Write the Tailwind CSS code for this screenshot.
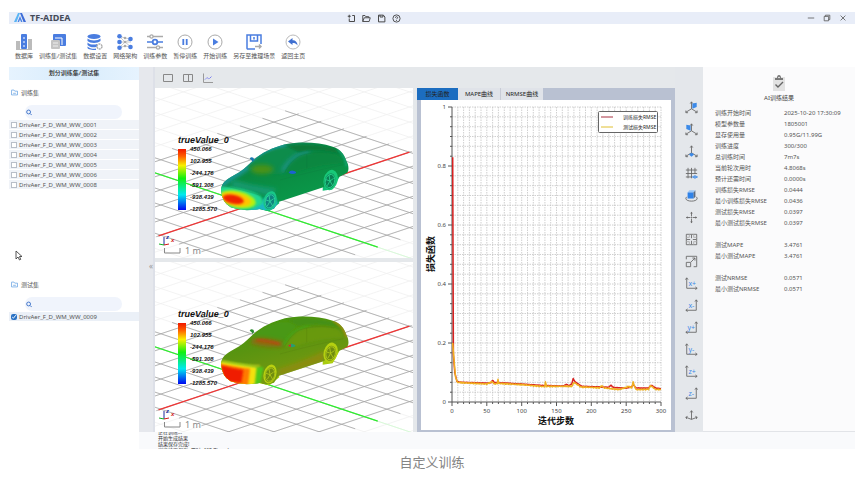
<!DOCTYPE html>
<html lang="zh-CN">
<head>
    <meta charset="UTF-8">
    <meta name="viewport" content="width=device-width, initial-scale=1.0">
    <title>TF-AIDEA</title>
    <script src="https://cdn.jsdelivr.net/npm/@tailwindcss/browser@4"></script>
</head>
<body class="bg-white pt-3 pl-[9px] pr-[13px] font-['Noto_Sans','Noto_Sans_CJK_SC',sans-serif] text-[6px] leading-[10px] text-[#555]">

    <!--Shared drawing definitions-->
    <svg class="absolute w-0 h-0" aria-hidden="true">
        <defs>
            <linearGradient id="rainbow" x1="0" y1="0" x2="0" y2="1">
                <stop offset="0" stop-color="#f01800"/>
                <stop offset=".12" stop-color="#ff6000"/>
                <stop offset=".27" stop-color="#f8f000"/>
                <stop offset=".48" stop-color="#10f010"/>
                <stop offset=".75" stop-color="#00e8f0"/>
                <stop offset="1" stop-color="#0008f0"/>
            </linearGradient>
            <linearGradient id="paintA" x1="0" y1="0" x2=".6" y2="1">
                <stop offset="0" stop-color="#1a8a70"/>
                <stop offset=".45" stop-color="#0a8840"/>
                <stop offset="1" stop-color="#0a9c4c"/>
            </linearGradient>
            <linearGradient id="paintB" x1="0" y1="0" x2=".5" y2="1">
                <stop offset="0" stop-color="#3c9612"/>
                <stop offset=".5" stop-color="#5a9410"/>
                <stop offset="1" stop-color="#7c9a10"/>
            </linearGradient>
            <filter id="soft" x="-40%" y="-40%" width="180%" height="180%"><feGaussianBlur stdDeviation="6"/></filter>
            <filter id="softer" x="-40%" y="-40%" width="180%" height="180%"><feGaussianBlur stdDeviation="3"/></filter>
            <path id="body" d="M33 180C35 158 50 148 72 136C95 123 110 110 122 98C150 72 180 55 225 43C270 34 325 36 368 50C392 58 402 72 409 92C417 106 417 120 412 128L386 142L340 172L205 216L192 236Q165 246 152 236Q100 247 62 232Q36 218 33 180Z"/>
            <clipPath id="bodyClip"><use href="#body"/></clipPath>
            <path id="glass" d="M224 128C236 108 248 90 270 78C300 66 345 66 372 72C388 76 396 88 398 100C350 104 300 112 260 126Z"/>
            <path id="screen" d="M112 112C130 92 160 66 205 56C235 52 262 56 262 68C240 84 228 110 222 130C190 136 140 128 112 112Z"/>
            <g id="spokes" fill="none" stroke-width="2.5">
                <ellipse rx="14" ry="20" transform="rotate(14)"/>
                <path d="M0 0L-3-18M0 0L11-8M0 0L8 14M0 0L-8 14M0 0L-12-4"/>
            </g>
            <g id="gizmo">
                <path d="M9 157v-8" stroke="#1c2a9c" stroke-width="1"/>
                <path d="M9 157l5-1" stroke="#d01818" stroke-width="1"/>
                <path d="M9 157l-5-1" stroke="#10b020" stroke-width="1"/>
                <g font-family="Liberation Sans, sans-serif" font-weight="bold" font-style="italic" font-size="6">
                    <text x="11" y="151" fill="#1c2a9c">z</text>
                    <text x="16" y="154" fill="#d01818">x</text>
                </g>
                <path d="M9.500 160v5h15.500v-5" fill="none" stroke="#888" stroke-width="1"/>
                <text x="30" y="166" font-size="9" fill="#888">1 m</text>
            </g>
            <g id="scale" font-family="Liberation Sans, sans-serif" font-weight="bold" font-style="italic" fill="#111">
                <rect x="23" y="61" width="8" height="61" fill="url(#rainbow)"/>
                <text x="23" y="55" font-size="9">trueValue_0</text>
                <g font-size="6">
                    <text x="35" y="63">450.066</text>
                    <text x="35" y="75">102.955</text>
                    <text x="35" y="87">-244.176</text>
                    <text x="35" y="99">-591.308</text>
                    <text x="35" y="111">-938.439</text>
                    <text x="35" y="123">-1285.570</text>
                </g>
            </g>
            <g id="folder" fill="none" stroke="#5a9be0" stroke-width="1.300">
                <path d="M1 3v8h11V4H7L5.500 2H1z"/><path d="M4 8h5"/>
            </g>
            <g id="lens" fill="none" stroke="#3c72c8" stroke-width="1.800">
                <circle cx="5" cy="5" r="3.700"/><path d="M8 8l3 3"/>
            </g>
            <g id="axesR" fill="none" stroke="#666"><path d="M2 1v12h12"/><path d="M.5 3L2 1l1.500 2M12 11.500L14 13l-2 1.500"/></g>
            <g id="axesL" fill="none" stroke="#666"><path d="M13 1v12H1"/><path d="M11.500 3L13 1l1.500 2M3 11.500L1 13l2 1.500"/></g>
            <g id="tripod" fill="none" stroke="#666"><path d="M7.500 1v8L1 13M7.500 9l6.500 4"/><path d="M6 3l1.500-2L9 3M3.500 13.500H1V11M11.500 13.500H14V11"/></g>
        </defs>
    </svg>

    <div class="relative">
        <!--Title bar-->
        <header class="flex h-3 items-center bg-[#e8edf8] pl-[5px] pr-2">
            <svg class="h-3 w-3" viewBox="0 0 12 12"><path d="M0 10L4 1h2L2.500 10z" fill="#5ab4f4"/><path d="M3.500 10L6 4l2.500 6H7L6 7.500 5 10z" fill="#4a84e4"/><path d="M6 1h2l4 9H9.500z" fill="#3c6cd8"/></svg>
            <h1 class="ml-1 text-[9px] leading-3 font-bold text-[#444a58]">TF-AIDEA</h1>
            <nav class="ml-[276px] flex gap-[6px]">
                <button aria-label="新建" class="block h-[9px] w-[9px]"><svg viewBox="0 0 12 12" fill="none" stroke="#444" stroke-width="1.300"><path d="M7 2h3v8H3V6M1 3h4M3 1v4"/></svg></button>
                <button aria-label="打开" class="block h-[9px] w-[9px]"><svg viewBox="0 0 12 12" fill="none" stroke="#444" stroke-width="1.200"><path d="M1 10V2h3l1 1.500h4V5M1 10l2-5h8L9.500 10z"/></svg></button>
                <button aria-label="保存" class="block h-[9px] w-[9px]"><svg viewBox="0 0 12 12" fill="none" stroke="#444" stroke-width="1.300"><path d="M2 1.500h6.500L10.500 4v6.500H2zM4 1.500V4h4V1.500"/></svg></button>
                <button aria-label="帮助" class="block h-[9px] w-[9px]"><svg viewBox="0 0 12 12" fill="none" stroke="#444" stroke-width="1.200"><circle cx="6" cy="6" r="4.800"/><path d="M4.500 5c0-2 3-2 3 0 0 1-1.500 1-1.500 2M6 8v1.200"/></svg></button>
            </nav>
            <div class="ml-auto flex gap-2">
                <button aria-label="最小化" class="block h-2 w-2"><svg viewBox="0 0 10 10" stroke="#555"><path d="M1 5h8"/></svg></button>
                <button aria-label="还原" class="block h-2 w-2"><svg viewBox="0 0 10 10" fill="none" stroke="#555"><path d="M1.500 3h5.500v5.500H1.500zM3 3V1.500h5.500V7H7"/></svg></button>
                <button aria-label="关闭" class="block h-2 w-2"><svg viewBox="0 0 10 10" stroke="#555"><path d="M2 2l6 6M8 2l-6 6"/></svg></button>
            </div>
        </header>

        <!--Main toolbar-->
        <nav class="flex h-[43px] gap-[6px] bg-white pl-[6px] pt-[10px]">
            <button class="flex flex-col items-center gap-px whitespace-nowrap"><svg class="h-4 w-4" viewBox="0 0 16 16"><path d="M0 7h4v8H0zM12 5h4v11h-4z" fill="#bbb"/><rect x="5" y="0" width="6" height="15" rx="1" fill="#4a7de0"/><path d="M8 3v2M8 7v2M8 11v2" stroke="#fff"/><path d="M0 15.500h16" stroke="#bbb"/></svg><span>数据库</span></button>
            <button class="flex flex-col items-center gap-px whitespace-nowrap"><svg class="h-4 w-4" viewBox="0 0 16 16"><rect x="3" y="0" width="13" height="12" rx="1" fill="#4a7de0"/><path d="M5 4h7v7" stroke="#fff" fill="none"/><rect x="1" y="6" width="9" height="9" rx="1" fill="#c4c4c4"/><path d="M3 9h5M3 12h5" stroke="#eee"/></svg><span>训练集/测试集</span></button>
            <button class="flex flex-col items-center gap-px whitespace-nowrap"><svg class="h-4 w-4" viewBox="0 0 16 16"><ellipse cx="7" cy="2.500" rx="6.500" ry="2.500" fill="#4a7de0"/><path d="M.5 4.500C3 7 11 7 13.500 4.500V7C11 9.500 3 9.500.5 7zM.5 8.500C3 11 8 11 10 10v2.500C7 14 3 13.500.5 11zM.5 12.500C3 15 7 15 9 14.500V16C5 16 1 15.500.5 14z" fill="#4a7de0"/><circle cx="12.500" cy="12.500" r="2.500" fill="#fff" stroke="#aaa" stroke-width="1.400" stroke-dasharray="2 .6"/></svg><span>数据设置</span></button>
            <button class="flex flex-col items-center gap-px whitespace-nowrap"><svg class="h-4 w-4" viewBox="0 0 16 16"><path d="M2 2l6 6 6-3M2 8h12M2 14l6-6 6 5M2 2l6 2 6 1M2 14l6-2 6 1" stroke="#ccc" fill="none"/><g fill="#4a7de0"><circle cx="2.500" cy="2.300" r="2.300"/><circle cx="2.500" cy="8" r="2.300"/><circle cx="2.500" cy="13.700" r="2.300"/><circle cx="13.500" cy="5" r="2.300"/><circle cx="13.500" cy="13" r="2.300"/></g><g fill="#aaa"><circle cx="8" cy="4" r="1.300"/><circle cx="8" cy="8" r="1.300"/><circle cx="8" cy="12" r="1.300"/></g></svg><span>网络架构</span></button>
            <button class="flex flex-col items-center gap-px whitespace-nowrap"><svg class="h-4 w-4" viewBox="0 0 16 16" fill="none" stroke-width="1.300"><path d="M0 2.500h3M6 2.500h10M0 13.500h9M13 13.500h3" stroke="#aaa"/><path d="M0 8h5.500M10.500 8H16" stroke="#4a7de0"/><circle cx="4.500" cy="2.500" r="1.600" stroke="#aaa"/><circle cx="8" cy="8" r="2.300" stroke="#4a7de0" stroke-width="1.800"/><circle cx="11" cy="13.500" r="1.600" stroke="#aaa"/></svg><span>训练参数</span></button>
            <button class="flex flex-col items-center gap-px whitespace-nowrap"><svg class="h-4 w-4" viewBox="0 0 16 16"><circle cx="8" cy="8" r="7" fill="#fff" stroke="#aaa"/><path d="M6.300 5v6M9.700 5v6" stroke="#4a7de0" stroke-width="1.800"/></svg><span>暂停训练</span></button>
            <button class="flex flex-col items-center gap-px whitespace-nowrap"><svg class="h-4 w-4" viewBox="0 0 16 16"><circle cx="8" cy="8" r="7" fill="#fff" stroke="#aaa"/><path d="M6 4.500L11.500 8 6 11.500z" fill="#4a7de0"/></svg><span>开始训练</span></button>
            <button class="flex flex-col items-center gap-px whitespace-nowrap"><svg class="h-4 w-4" viewBox="0 0 16 16" fill="none" stroke="#4a7de0" stroke-width="1.500"><path d="M9 15H1.500A1 1 0 0 1 1 14V1h14v9M4.500 1v6h7V1M8 3v2.500"/><path d="M9 12.500h6M13 10.500l2 2-2 2" stroke="#aaa"/></svg><span>另存至推理场景</span></button>
            <button class="flex flex-col items-center gap-px whitespace-nowrap"><svg class="h-4 w-4" viewBox="0 0 16 16"><circle cx="8" cy="8" r="7" fill="#fff" stroke="#bbb"/><path d="M3 7.500L7.500 4v2.200c3 0 5 2 5 5.300-1.300-2-2.700-2.500-5-2.500v2z" fill="#3f6fd0"/></svg><span>返回主页</span></button>
        </nav>

        <div class="flex">
            <!--Data set lists-->
            <aside class="w-[130px] shrink-0 bg-white">
                <h2 class="h-[13px] bg-linear-to-r from-[#e6f3fe] via-[#d8ecfc] to-[#e6f3fe] text-center leading-[13px] font-medium text-[#222]">划分训练集/测试集</h2>
                <section class="min-h-[192px]">
                    <h3 class="flex h-[25px] items-center gap-[3px] pl-[2px]"><svg class="h-[7px] w-[7px]" viewBox="0 0 13 13"><use href="#folder"/></svg>训练集</h3>
                    <label class="mr-[17px] mb-px ml-4 flex h-[14px] items-center gap-1 rounded-full bg-[#f0f4fc] pl-px"><svg class="h-[7px] w-[7px]" viewBox="0 0 12 12"><use href="#lens"/></svg><input type="search" aria-label="搜索训练集" class="w-full outline-none"></label>
                    <ul id="train-list"></ul>
                </section>
                <section>
                    <h3 class="flex h-[25px] items-center gap-[3px] pl-[2px]"><svg class="h-[7px] w-[7px]" viewBox="0 0 13 13"><use href="#folder"/></svg>测试集</h3>
                    <label class="mr-[17px] mb-px ml-4 flex h-[14px] items-center gap-1 rounded-full bg-[#f0f4fc] pl-px"><svg class="h-[7px] w-[7px]" viewBox="0 0 12 12"><use href="#lens"/></svg><input type="search" aria-label="搜索测试集" class="w-full outline-none"></label>
                    <ul>
                        <li class="mb-px bg-[#ebf0f7]"><label class="flex h-[9px] items-center gap-[2px] pl-[2px]"><input type="checkbox" checked class="h-[6px] w-[6px] accent-[#2a72c4]">DrivAer_F_D_WM_WW_0009</label></li>
                    </ul>
                </section>
            </aside>

            <div class="flex w-4 shrink-0 items-center justify-end border-r-2 border-[#dde0e8] bg-[#e6e8ed]">
                <button aria-label="收起" class="block pt-8 text-[8px] text-[#999]">«</button>
            </div>

            <!--Viewports and chart-->
            <main class="min-w-0 flex-1 bg-[#e5e8eb]">
                <div class="flex h-[21px] items-center gap-[10px] pl-2">
                    <button aria-label="单视图" class="block h-[10px] w-[10px]"><svg viewBox="0 0 10 10" fill="none" stroke="#888"><path d="M.5 1.500h9v7h-9z"/></svg></button>
                    <button aria-label="双视图" class="block h-[10px] w-[10px]"><svg viewBox="0 0 10 10" fill="none" stroke="#888"><path d="M.5 1.500h9v7h-9zM5.500 1.500v7"/></svg></button>
                    <button aria-label="曲线" class="block h-[10px] w-[10px]"><svg viewBox="0 0 10 10" fill="none"><path d="M.5.5v9H10" stroke="#999"/><path d="M2 6.500l2-2 2 1.500L9 3" stroke="#6c70f0" stroke-dasharray="1.500 .8"/></svg></button>
                </div>
                <div class="grid grid-cols-2 gap-1">
                    <div class="flex flex-col gap-1">
                        <svg class="block h-auto w-full bg-white" viewBox="0 0 258 170" role="img" aria-label="trueValue_0">
                            <g class="floor"></g>
                            <g transform="translate(55 42) scale(.3333)">
                                <path d="M340 130l36-18 12 30-20 36-30 4zM150 190l50-14 8 44-30 24-30-6z" fill="#10bc74"/>
                                <use href="#body" fill="url(#paintA)"/>
                                <g clip-path="url(#bodyClip)">
                                    <path d="M30 170C50 146 100 126 130 92C160 64 190 52 225 42" stroke="#1f98a0" stroke-width="16" fill="none" filter="url(#soft)"/>
                                    <path d="M70 150Q130 168 200 176L180 200Q120 180 60 172z" fill="#149a70" filter="url(#soft)"/>
                                    <use href="#screen" fill="#0f8c4c" filter="url(#softer)"/>
                                    <ellipse cx="156" cy="118" rx="34" ry="14" fill="#4a9218" filter="url(#soft)"/>
                                    <path d="M218 124C232 96 255 74 300 62" stroke="#1f9490" stroke-width="11" fill="none" filter="url(#soft)"/>
                                    <use href="#glass" fill="#0b8640" opacity=".75" filter="url(#softer)"/>
                                    <path d="M230 48Q300 36 370 54L396 74Q330 52 265 66z" fill="#087838" filter="url(#softer)"/>
                                    <path d="M384 58Q406 76 410 110" stroke="#16a880" stroke-width="5" fill="none" filter="url(#softer)"/>
                                    <path d="M100 252Q175 262 206 224L195 200Q165 190 155 215L130 230z" fill="#1fb8c4" filter="url(#softer)"/>
                                    <path d="M24 172Q60 166 120 184Q164 196 158 220Q140 238 90 244Q30 240 24 172z" fill="#20d890" filter="url(#softer)"/>
                                    <ellipse cx="82" cy="208" rx="56" ry="25" fill="#b8f010" transform="rotate(12 82 208)" filter="url(#softer)"/>
                                    <ellipse cx="78" cy="208" rx="45" ry="19" fill="#ffc400" transform="rotate(12 78 208)" filter="url(#softer)"/>
                                    <ellipse cx="70" cy="208" rx="32" ry="13" fill="#f02000" transform="rotate(12 70 208)" filter="url(#softer)"/>
                                </g>
                                <path d="M224 128C236 108 248 90 270 78C300 66 345 66 372 72M290 72v44M210 150Q290 128 400 104M36 166Q110 182 150 196" stroke="#08703c" fill="none" opacity=".4" stroke-width="1.500"/>
                                <ellipse cx="180" cy="212" rx="19" ry="29" fill="#18c888" transform="rotate(16 180 212)"/>
                                <ellipse cx="180" cy="214" rx="15" ry="23" fill="#108480" transform="rotate(16 180 214)"/>
                                <use href="#spokes" x="180" y="214" stroke="#30d8a0"/>
                                <ellipse cx="362" cy="150" rx="21" ry="31" fill="#18c878" transform="rotate(14 362 150)"/>
                                <ellipse cx="360" cy="153" rx="16" ry="23" fill="#0a8054" transform="rotate(14 360 153)"/>
                                <use href="#spokes" x="360" y="153" stroke="#28d890"/>
                                <path d="M236 128q4-8 14-6 10 2 8 7-10 6-22-1z" fill="#1c62d0"/>
                                <path d="M119 86q4-7 11-3 4 5 1 9l-4 3q-1-6-8-9z" fill="#1878b0"/>
                            </g>
                            <use href="#scale"/><use href="#gizmo"/>
                        </svg>
                        <svg class="block h-auto w-full bg-white" viewBox="0 0 258 170" role="img" aria-label="trueValue_0">
                            <g class="floor"></g>
                            <g transform="translate(55 42) scale(.3333)">
                                <path d="M340 130l36-18 12 30-20 36-30 4zM150 190l50-14 8 44-30 24-30-6z" fill="#a8cc10"/>
                                <use href="#body" fill="url(#paintB)"/>
                                <g clip-path="url(#bodyClip)">
                                    <use href="#screen" fill="#4a9812" filter="url(#softer)"/>
                                    <path d="M128 104Q165 98 226 116L214 128Q160 132 120 116z" fill="#96660f" filter="url(#soft)"/>
                                    <path d="M140 108Q170 108 208 120" stroke="#b84810" stroke-width="6" fill="none" filter="url(#softer)"/>
                                    <path d="M222 124C236 96 255 76 300 64" stroke="#48a018" stroke-width="10" fill="none" filter="url(#softer)"/>
                                    <use href="#glass" fill="#6c9a10" opacity=".8" filter="url(#softer)"/>
                                    <path d="M230 48Q300 36 370 54L396 74Q330 52 265 66z" fill="#459012" filter="url(#softer)"/>
                                    <path d="M370 50Q402 66 410 100" stroke="#a88a10" stroke-width="6" fill="none" filter="url(#softer)"/>
                                    <path d="M205 196Q290 168 345 140L340 172 205 216z" fill="#8c8c10" filter="url(#soft)"/>
                                    <path d="M30 172Q80 178 160 190L150 244 40 240z" fill="#50c81c" filter="url(#softer)"/>
                                    <path d="M30 172Q80 182 140 190L134 244 40 244z" fill="#f4e010" filter="url(#softer)"/>
                                    <path d="M30 180Q80 190 120 194L114 244 40 244z" fill="#ff7a00" filter="url(#softer)"/>
                                    <path d="M32 184Q70 194 100 198L94 236 44 232z" fill="#f01c00" filter="url(#softer)"/>
                                    <path d="M36 170Q90 184 150 186" stroke="#c8cc20" stroke-width="4" fill="none" filter="url(#softer)"/>
                                </g>
                                <path d="M224 128C236 108 248 90 270 78C300 66 345 66 372 72M290 72v44M210 150Q290 128 400 104" stroke="#4c7008" fill="none" opacity=".4" stroke-width="1.500"/>
                                <ellipse cx="180" cy="210" rx="19" ry="29" fill="#b8d010" transform="rotate(16 180 210)"/>
                                <ellipse cx="180" cy="212" rx="15" ry="23" fill="#708c10" transform="rotate(16 180 212)"/>
                                <use href="#spokes" x="180" y="212" stroke="#b0c818"/>
                                <ellipse cx="362" cy="146" rx="21" ry="31" fill="#b4d010" transform="rotate(14 362 146)"/>
                                <ellipse cx="362" cy="148" rx="16" ry="23" fill="#708c10" transform="rotate(14 362 148)"/>
                                <use href="#spokes" x="362" y="148" stroke="#b4cc18"/>
                                <path d="M234 126q4-8 14-6 10 2 8 7-10 6-22-1z" fill="#2a9c70"/><path d="M234 126q4-6 9-5l-1 8z" fill="#e03010"/>
                                <path d="M119 80q4-7 11-3 4 5 1 9l-4 3q-1-6-8-9z" fill="#2a8c30"/>
                            </g>
                            <use href="#scale"/><use href="#gizmo"/>
                        </svg>
                    </div>

                    <section class="bg-[#b9c1d2]">
                        <div role="tablist" class="flex h-3 text-[#222]">
                            <button role="tab" aria-selected="true" class="w-[41px] bg-[#1c6dc0]">损失函数</button>
                            <button role="tab" class="w-[43px] border-r border-[#c8ccd6] bg-[#e0e3e9]">MAPE曲线</button>
                            <button role="tab" class="w-[42px] bg-[#e0e3e9]">NRMSE曲线</button>
                        </div>
                        <div class="px-1 pb-[2px]">
                            <svg id="chart" class="block h-auto w-full bg-white" viewBox="0 0 250 330" role="img" aria-label="损失函数">
                                <g id="chart-grid" stroke="#c4c4c4" stroke-width=".8" stroke-dasharray="1.500 1"></g>
                                <g id="chart-ticks" stroke="#555" stroke-width="1"></g>
                                <g id="chart-labels" font-size="6" fill="#444"></g>
                                <g id="chart-lines" fill="none" stroke-width="1.500" stroke-linejoin="round"></g>
                                <rect x="177.500" y="11.500" width="59" height="21" rx="1" fill="#fff" stroke="#666"/>
                                <path d="M180 17h12" stroke="#a83040"/>
                                <path d="M180 27h12" stroke="#e0c030"/>
                                <g font-size="5" fill="#222"><text x="202" y="19">训练损失RMSE</text><text x="202" y="29">测试损失RMSE</text></g>
                                <g font-size="9" font-weight="bold" fill="#111" text-anchor="middle">
                                    <text x="135" y="324">迭代步数</text>
                                    <text transform="translate(13 154) rotate(-90)">损失函数</text>
                                </g>
                            </svg>
                        </div>
                    </section>
                </div>
            </main>

            <!--View tools-->
            <nav class="flex w-7 shrink-0 flex-col items-center bg-[#e4e7eb] pr-px pl-[5px] pt-[29px]">
                <button aria-label="YZ平面" class="flex h-[22px] items-center"><svg class="h-[13px] w-[13px]" viewBox="0 0 15 15"><use href="#tripod"/><path d="M8.500 3l5-1v5l-5 2z" fill="#3c8ae8"/></svg></button>
                <button aria-label="XZ平面" class="flex h-[22px] items-center"><svg class="h-[13px] w-[13px]" viewBox="0 0 15 15"><use href="#tripod"/><path d="M1.500 2l5 1v6l-5-2z" fill="#3c8ae8"/></svg></button>
                <button aria-label="XY平面" class="flex h-[22px] items-center"><svg class="h-[13px] w-[13px]" viewBox="0 0 15 15"><use href="#tripod"/><path d="M7.500 9l3 2-3 2.500-3-2.500z" fill="#3c8ae8"/></svg></button>
                <button aria-label="网格" class="flex h-[22px] items-center"><svg class="h-[13px] w-[13px]" viewBox="0 0 15 15" fill="none" stroke="#666"><path d="M3.500 1v12M7.500 1v12M11.500 1v7M1 3.500h13M1 7.500h13M1 11.500h7"/><path d="M8.500 11.500q3-3 6 0-3 3-6 0z" stroke="#3c8ae8"/><circle cx="11.500" cy="11.500" r="1" fill="#3c8ae8" stroke="none"/></svg></button>
                <button aria-label="透视" class="flex h-[22px] items-center"><svg class="h-[13px] w-[13px]" viewBox="0 0 15 15"><path d="M3 4l2-2.500h7L10 4z" fill="#9cc8f8"/><path d="M3 4h7v7H3z" fill="#2f82e8"/><path d="M10 4l2-2.500V9l-2 2z" fill="#5a6a80"/><path d="M2 9C-1 12 3 14 7.500 14S16 12 13 9" fill="none" stroke="#666"/></svg></button>
                <button aria-label="平移" class="flex h-[22px] items-center"><svg class="h-[13px] w-[13px]" viewBox="0 0 15 15" stroke="#666" fill="#666"><path d="M7.500 2v4M7.500 9v4M2 7.500h4M9 7.500h4"/><path d="M7.500 1L6 3h3zM7.500 14L6 12h3zM1 7.500L3 6v3zM14 7.500L12 6v3z" stroke="none"/><circle cx="7.500" cy="7.500" r=".5"/></svg></button>
                <button aria-label="适应窗口" class="flex h-[22px] items-center"><svg class="h-[13px] w-[13px]" viewBox="0 0 15 15" fill="none" stroke="#666"><path d="M1.500 1.500h12v12h-12zM7.500 2v4M7.500 9v4M2 7.500h4M9 7.500h4"/><path d="M5 1.500V5H1.500M10 1.500V5h3.500M5 13.500V10H1.500M10 13.500V10h3.500" stroke="#aaa"/></svg></button>
                <button aria-label="框选缩放" class="flex h-[22px] items-center"><svg class="h-[13px] w-[13px]" viewBox="0 0 15 15" fill="none" stroke="#666"><path d="M1.500 5V1.500h12v12H10M1.500 8.500h5v5h-5zM7 8l4.500-4.500M8.500 3.500h3v3"/></svg></button>
                <button aria-label="X正向" class="flex h-[22px] items-center"><svg class="h-[13px] w-[13px]" viewBox="0 0 15 15"><use href="#axesR"/><text x="4" y="10" font-size="8" fill="#3c8ae8">x+</text></svg></button>
                <button aria-label="X负向" class="flex h-[22px] items-center"><svg class="h-[13px] w-[13px]" viewBox="0 0 15 15"><use href="#axesL"/><text x="4" y="10" font-size="8" fill="#3c8ae8">x-</text></svg></button>
                <button aria-label="Y正向" class="flex h-[22px] items-center"><svg class="h-[13px] w-[13px]" viewBox="0 0 15 15"><use href="#axesL"/><text x="3" y="10" font-size="8" fill="#3c8ae8">y+</text></svg></button>
                <button aria-label="Y负向" class="flex h-[22px] items-center"><svg class="h-[13px] w-[13px]" viewBox="0 0 15 15"><use href="#axesR"/><text x="4" y="10" font-size="8" fill="#3c8ae8">y-</text></svg></button>
                <button aria-label="Z正向" class="flex h-[22px] items-center"><svg class="h-[13px] w-[13px]" viewBox="0 0 15 15"><use href="#axesR"/><text x="4" y="10" font-size="8" fill="#3c8ae8">z+</text></svg></button>
                <button aria-label="Z负向" class="flex h-[22px] items-center"><svg class="h-[13px] w-[13px]" viewBox="0 0 15 15"><use href="#axesL"/><text x="4" y="10" font-size="8" fill="#3c8ae8">z-</text></svg></button>
                <button aria-label="等轴测" class="flex h-[22px] items-center"><svg class="h-[13px] w-[13px]" viewBox="0 0 15 15" fill="none" stroke="#666"><path d="M7.500 2v10L1 9.500M7.500 12L14 9.500M6 4l1.500-2L9 4M3 8.500l-2 1 1 2M12 8.500l2 1-1 2"/></svg></button>
            </nav>

            <!--Training results-->
            <aside class="w-[152px] shrink-0 border-b border-[#e2e4e8] bg-[#fbfbfc] pt-2">
                <svg class="mx-auto block h-4 w-4" viewBox="0 0 16 16"><rect x="2" y="2" width="12" height="14" fill="#e2e2e2"/><path d="M4 3h2q0-3 2-3t2 3h2v2H4z" fill="#777"/><circle cx="8" cy="2.500" r=".8" fill="#fff"/><path d="M4.500 9.500l2.500 2.500 5-5" fill="none" stroke="#666" stroke-width="1.400"/></svg>
                <h2 class="mt-[2px] mb-[5px] text-center text-[#444]">AI训练结果</h2>
                <table class="ml-3 leading-[11px]">
                    <tbody>
                        <tr><th class="w-[69px] p-0 text-left font-normal">训练开始时间</th><td class="p-0 whitespace-nowrap">2025-10-20 17:30:09</td></tr>
                        <tr><th class="p-0 text-left font-normal">模型参数量</th><td class="p-0">1805001</td></tr>
                        <tr><th class="p-0 text-left font-normal">显存使用量</th><td class="p-0">0.95G/11.99G</td></tr>
                        <tr><th class="p-0 text-left font-normal">训练进度</th><td class="p-0">300/300</td></tr>
                        <tr><th class="p-0 text-left font-normal">总训练时间</th><td class="p-0">7m7s</td></tr>
                        <tr><th class="p-0 text-left font-normal">当前轮次用时</th><td class="p-0">4.8068s</td></tr>
                        <tr><th class="p-0 text-left font-normal">预计还需时间</th><td class="p-0">0.0000s</td></tr>
                        <tr><th class="p-0 text-left font-normal">训练损失RMSE</th><td class="p-0">0.0444</td></tr>
                        <tr><th class="p-0 text-left font-normal">最小训练损失RMSE</th><td class="p-0">0.0436</td></tr>
                        <tr><th class="p-0 text-left font-normal">测试损失RMSE</th><td class="p-0">0.0397</td></tr>
                        <tr><th class="p-0 text-left font-normal">最小测试损失RMSE</th><td class="p-0">0.0397</td></tr>
                    </tbody>
                    <tbody>
                        <tr><th class="p-0 pt-[11px] text-left font-normal">测试MAPE</th><td class="p-0 pt-[11px]">3.4761</td></tr>
                        <tr><th class="p-0 text-left font-normal">最小测试MAPE</th><td class="p-0">3.4761</td></tr>
                    </tbody>
                    <tbody>
                        <tr><th class="p-0 pt-[11px] text-left font-normal">测试NRMSE</th><td class="p-0 pt-[11px]">0.0571</td></tr>
                        <tr><th class="p-0 text-left font-normal">最小测试NRMSE</th><td class="p-0">0.0571</td></tr>
                    </tbody>
                </table>
            </aside>
        </div>

        <!--Log output, scrolled between lines-->
        <div class="ml-[130px] flex h-[17px] flex-col justify-center overflow-hidden bg-[#f9fafc] pl-[19px] text-[5px] leading-[6px] text-[#333]">
            <p class="shrink-0">正在训练...</p>
            <p class="shrink-0">开始生成结果</p>
            <p class="shrink-0">结果保存完成!</p>
            <p class="shrink-0">训练结果保存, 用时: 428.7(secs)</p>
        </div>

        <!--Mouse pointer-->
        <svg class="absolute top-[238px] left-[6px] h-[11px] w-[8px]" viewBox="0 0 8 11"><path d="M1 1v8l2-2 1.500 3 1.200-.6L4.500 6.500H7z" fill="#fff" stroke="#444" stroke-width=".9"/></svg>
    </div>

    <p class="pt-1 text-center text-[13px] leading-[18px] text-[#858585]">自定义训练</p>

    <script>
        //training cases
        const cases=["0001","0002","0003","0004","0005","0006","0008"];
        document.getElementById("train-list").innerHTML=cases.map(n =>
            `<li class="mb-px bg-[#f0f3f8]"><label class="flex h-[9px] items-center gap-[2px] pl-[2px]"><input type="checkbox" class="h-[6px] w-[6px] appearance-none border border-[#b8bec8] bg-white">DrivAer_F_D_WM_WW_${n}</label></li>`).join("");

        //floor grid, i runs along the green axis and j along the red one
        const at=(i,j) => `${(96.2+22.6*(i+j)).toFixed(1)} ${(117+7.54*(i-j)).toFixed(1)}`;
        let far="", near="";
        for (let i=-16;i<=12;i++) far+=`M${at(i,-14)}L${at(i,18)}`;
        for (let j=-12;j<=18;j++) far+=`M${at(-16,j)}L${at(12,j)}`;
        for (let i=-5;i<=5;i++) near+=`M${at(i,-4.2)}L${at(i,7.1)}`;
        for (let j=-4;j<=7;j++) near+=`M${at(-5.5,j)}L${at(5.6,j)}`;
        document.querySelectorAll(".floor").forEach(g => {
            g.innerHTML=`<path d="${far}" stroke="#f0f0f0" stroke-width=".8"/>
                <path d="${near}" stroke="#a4a4a4" stroke-width=".8"/>
                <path d="M${at(0,-4.1)}L${at(0,7)}" stroke="#f03434" stroke-width="1.300"/>
                <path d="M${at(-4.3,0)}L${at(5.6,0)}" stroke="#2cf02c" stroke-width="1.300"/>
                <path d="M${at(5.6,0)}L${at(8,0)}" stroke="#d8fad8"/>`;
        });

        //loss chart
        const px=e => 31+e*209/300;
        const py=v => 302-295*v;
        let grid="", ticks="M31 7V302H240", labels="";
        for (let k=0;k<=36;k++) {
            const x=px(k*50/6).toFixed(1);
            if (k) grid+=`<path d="M${x} 7V302"/>`;
            ticks+=`M${x} 302v${k%6 ? 2 : 4}`;
            if (k%6===0) labels+=`<text x="${x}" y="313" text-anchor="middle">${k/6*50}</text>`;
        }
        for (let k=0;k<=30;k++) {
            const y=py(k/30).toFixed(1);
            if (k) grid+=`<path d="M31 ${y}H240"/>`;
            ticks+=`M31 ${y}h${k%6 ? -2 : -4}`;
            if (k%6===0) labels+=`<text x="25" y="${+y+2}" text-anchor="end">${k/30}</text>`;
        }
        document.getElementById("chart-grid").innerHTML=grid;
        document.getElementById("chart-ticks").innerHTML=`<path fill="none" d="${ticks}"/>`;
        document.getElementById("chart-labels").innerHTML=labels;

        const train=[[1,.83],[2,.16],[4,.1],[7,.07],[12,.067],[50,.064],[56,.065],[58,.074],[61,.066],[80,.064],[105,.06],[130,.056],[160,.054],[164,.06],[168,.055],[172,.062],[174,.079],[177,.068],[182,.06],[186,.053],[225,.05],[228,.057],[232,.049],[250,.047],[258,.052],[260,.06],[264,.048],[282,.047],[286,.057],[293,.047],[300,.045]];
        const test=[[1,.2],[3,.14],[5,.085],[8,.066],[50,.061],[58,.069],[60,.062],[65,.062],[66,.078],[67,.063],[105,.058],[133,.052],[134,.068],[136,.053],[165,.053],[172,.053],[175,.066],[178,.062],[185,.051],[212,.048],[215,.056],[218,.048],[240,.042],[254,.053],[258,.047],[260,.067],[264,.042],[282,.043],[285,.056],[292,.043],[300,.042]];
        const trace=(pts,wobble) => {
            let d="";
            for (let n=0;n<pts.length-1;n++) {
                const [a,va]=pts[n], [b,vb]=pts[n+1];
                for (let e=a;e<b;e++) {
                    const v=va+(vb-va)*(e-a)/(b-a)+(e>10 ? wobble*Math.sin(e*2.3)*Math.cos(e*.7) : 0);
                    d+=`${d ? "L" : "M"}${px(e).toFixed(1)} ${py(v).toFixed(1)}`;
                }
            }
            return d+`L${px(300)} ${py(pts[pts.length-1][1])}`;
        };
        document.getElementById("chart-lines").innerHTML=
            `<path d="${trace(train,.001)}" stroke="#d82020"/><path d="${trace(test,.002)}" stroke="#f0b020"/>`;
    </script>
</body>

</html>
